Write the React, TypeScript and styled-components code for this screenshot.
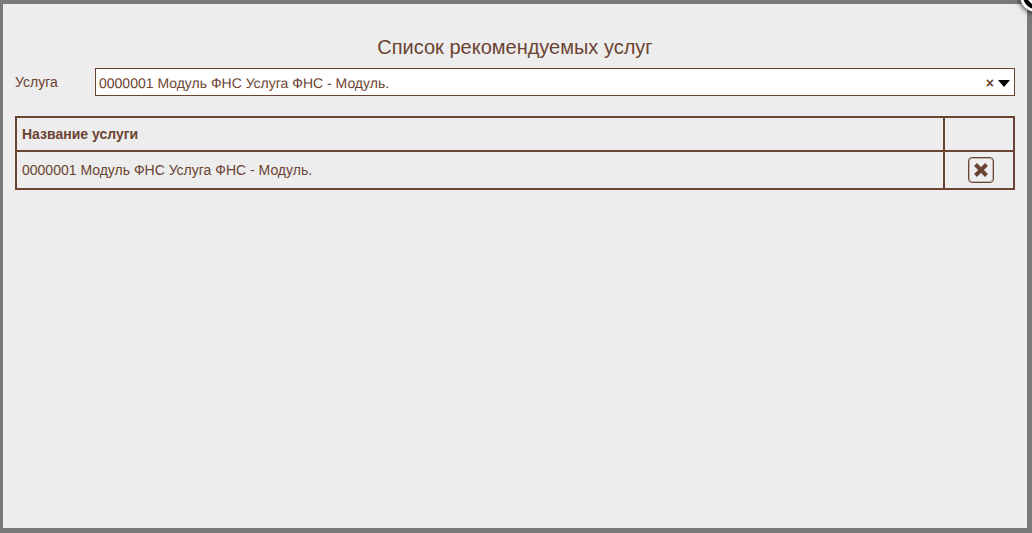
import styled, { createGlobalStyle } from 'styled-components';

const GlobalStyle = createGlobalStyle`
  html, body {
    margin: 0;
    height: 100%;
    overflow: hidden;
    background: #7a7a7a;
  }
`;

const Overlay = styled.div`
  width: 1032px;
  height: 533px;
  padding: 4px 5px 5px 3px;
  box-sizing: border-box;
  overflow: hidden;
  position: relative;
  font-family: 'Liberation Sans', Arial, sans-serif;
  color: #6b4332;
`;

const Dialog = styled.div`
  height: 100%;
  background: #ededed;
  padding: 32px 12px 0;
  box-sizing: border-box;
`;

const Title = styled.h2`
  margin: 0 0 9px;
  font-size: 20px;
  line-height: 23px;
  font-weight: normal;
  text-align: center;
`;

const FieldRow = styled.div`
  display: flex;
  align-items: center;
  height: 28px;
  margin-bottom: 20px;
`;

const FieldLabel = styled.label`
  width: 80px;
  font-size: 14px;
`;

const Select = styled.div`
  flex: 1;
  height: 28px;
  box-sizing: border-box;
  display: flex;
  align-items: center;
  padding: 1px 4px 0 3px;
  background: #fff;
  border: 1px solid #6b4332;
  font-size: 14px;
`;

const SelectValue = styled.span`
  flex: 1;
  text-rendering: geometricPrecision;
`;

const ClearMark = styled.span`
  font-size: 14px;
  font-weight: bold;
  margin-right: 4px;
`;

const Caret = styled.span`
  width: 0;
  height: 0;
  margin-top: 1px;
  border-left: 6px solid transparent;
  border-right: 6px solid transparent;
  border-top: 7px solid #000;
`;

const Table = styled.table`
  width: 1000px;
  border-collapse: collapse;
  table-layout: fixed;
  font-size: 14px;
`;

const HeadCell = styled.th`
  height: 34px;
  padding: 0 5px;
  box-sizing: border-box;
  border: 2px solid #6b4332;
  text-align: left;
  font-weight: bold;
`;

const Cell = styled.td<{ $center?: boolean }>`
  height: 38px;
  padding: 0 5px;
  box-sizing: border-box;
  border: 2px solid #6b4332;
  text-align: ${(p) => (p.$center ? 'center' : 'left')};
`;

const RemoveButton = styled.button`
  display: inline-flex;
  align-items: center;
  justify-content: center;
  width: 26px;
  height: 26px;
  padding: 0;
  margin-left: 3px;
  vertical-align: middle;
  background: #eeeeee;
  border: 1px solid #6b4332;
  border-radius: 4px;
  box-shadow: inset 0 0 0 1px rgba(107, 67, 50, 0.35);
`;

const CloseBadge = styled.div`
  position: absolute;
  top: -20px;
  right: -20px;
  width: 32px;
  height: 32px;
  box-sizing: border-box;
  display: flex;
  align-items: center;
  justify-content: center;
  border-radius: 50%;
  background: #000;
  border: 3px solid #fff;
  box-shadow: -1px 1px 5px rgba(0, 0, 0, 0.7);
`;

const App = () => {
  return (
    <Overlay>
      <GlobalStyle />
      <Dialog>
        <Title>Список рекомендуемых услуг</Title>
        <FieldRow>
          <FieldLabel>Услуга</FieldLabel>
          <Select>
            <SelectValue>0000001 Модуль ФНС Услуга ФНС - Модуль.</SelectValue>
            <ClearMark>×</ClearMark>
            <Caret />
          </Select>
        </FieldRow>
        <Table>
          <colgroup>
            <col />
            <col style={{ width: 70 }} />
          </colgroup>
          <thead>
            <tr>
              <HeadCell>Название услуги</HeadCell>
              <HeadCell />
            </tr>
          </thead>
          <tbody>
            <tr>
              <Cell>0000001 Модуль ФНС Услуга ФНС - Модуль.</Cell>
              <Cell $center>
                <RemoveButton>
                  <svg width="16" height="16" viewBox="0 0 16 16">
                    <path d="M2.5 2.5 L13.5 13.5 M13.5 2.5 L2.5 13.5" stroke="#6b4332" strokeWidth="4" fill="none" />
                  </svg>
                </RemoveButton>
              </Cell>
            </tr>
          </tbody>
        </Table>
      </Dialog>
      <CloseBadge>
        <svg width="16" height="16" viewBox="0 0 16 16">
          <path d="M2 2 L14 14 M14 2 L2 14" stroke="#fff" strokeWidth="7" fill="none" />
        </svg>
      </CloseBadge>
    </Overlay>
  );
};

export default App;
